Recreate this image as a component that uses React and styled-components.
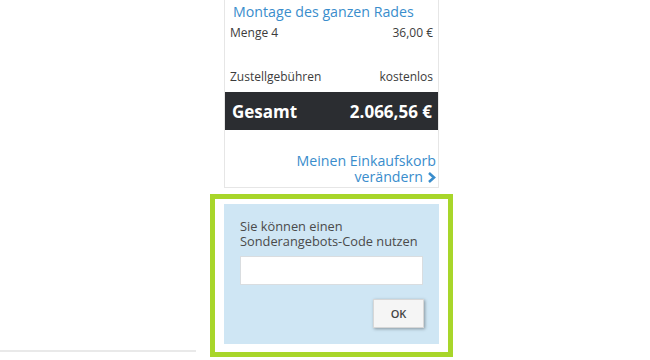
import styled, { createGlobalStyle } from 'styled-components'

const Global = createGlobalStyle`
    body {
        margin: 0;
        background: #fff;
        font-family: "Open Sans", "Noto Sans", sans-serif;
        color: #444;
    }
`

const Page = styled.div`
    display: flex;
    width: 650px;
    height: 360px;
    overflow: hidden;
`

const Side = styled.div`
    width: 196px;
    height: 350px;
    border-bottom: 2px solid #e9e9e9;
`

const Column = styled.div`
    display: flex;
    flex-direction: column;
    margin-left: 14px;
    width: 243px;
`

const Card = styled.div`
    margin-left: 14px;
    width: 213px;
    border: 1px solid #e6e6e6;
    border-top: none;
    display: flex;
    flex-direction: column;
    padding-bottom: 2px;
`

const Title = styled.div`
    height: 24px;
    line-height: 24px;
    padding: 0 8px;
    font-size: 14.2px;
    color: #3a8dcc;
    white-space: nowrap;
`

const Row = styled.div`
    display: flex;
    justify-content: space-between;
    align-items: center;
    height: 16px;
    padding: 0 5px;
    margin-top: ${p => p.$gap || 0}px;
    font-size: 12px;
    color: #3c3c3c;
`

const Total = styled.div`
    display: flex;
    justify-content: space-between;
    align-items: center;
    height: 38px;
    margin-top: 8px;
    padding: 0 6px 0 7px;
    background: #2b2d31;
    color: #fff;
    font-size: 17px;
    font-weight: 700;
`

const Link = styled.a`
    display: block;
    margin-top: 23px;
    padding-right: 2px;
    text-align: right;
    font-size: 14.2px;
    line-height: 16px;
    color: #3a8dcc;
    text-decoration: none;
`

const Chevron = styled.svg`
    width: 9px;
    height: 11px;
    margin-left: 4px;
    vertical-align: -1px;
`

const Frame = styled.div`
    margin-top: 6px;
    border: 5px solid #a8d62a;
    padding: 5px 9px 8px 9px;
`

const Promo = styled.div`
    background: #cfe6f4;
    height: 140px;
    box-sizing: border-box;
    padding: 15px 16px 15px 16px;
    display: flex;
    flex-direction: column;
`

const Hint = styled.p`
    margin: 0;
    font-size: 12.8px;
    line-height: 15px;
    color: #4a4a4a;
`

const Input = styled.input`
    margin-top: 7px;
    width: 183px;
    height: 29px;
    box-sizing: border-box;
    border: 1px solid #d9dde0;
    background: #fff;
    outline: none;
`

const Button = styled.button`
    align-self: flex-end;
    margin-top: 14px;
    margin-right: -1px;
    width: 51px;
    height: 29px;
    border: 1px solid #d7d7d7;
    background: #f5f5f5;
    box-shadow: 1px 1px 3px rgba(0, 0, 0, 0.35);
    font-family: "Open Sans", "Noto Sans", sans-serif;
    font-size: 11px;
    font-weight: 600;
    color: #444;
    padding: 0;
`

export default function App() {
    return (
        <Page>
            <Global />
            <Side />
            <Column>
                <Card>
                    <Title>Montage des ganzen Rades</Title>
                    <Row>
                        <span>Menge 4</span>
                        <span>36,00 €</span>
                    </Row>
                    <Row $gap={28}>
                        <span>Zustellgebühren</span>
                        <span>kostenlos</span>
                    </Row>
                    <Total>
                        <span>Gesamt</span>
                        <span>2.066,56 €</span>
                    </Total>
                    <Link href="#">
                        Meinen Einkaufskorb<br />
                        verändern
                        <Chevron viewBox="0 0 9 11">
                            <path d="M2 1 L7 5.5 L2 10" fill="none" stroke="#3a8dcc" strokeWidth="2.6" />
                        </Chevron>
                    </Link>
                </Card>
                <Frame>
                    <Promo>
                        <Hint>Sie können einen<br />Sonderangebots-Code nutzen</Hint>
                        <Input type="text" />
                        <Button>OK</Button>
                    </Promo>
                </Frame>
            </Column>
        </Page>
    )
}
